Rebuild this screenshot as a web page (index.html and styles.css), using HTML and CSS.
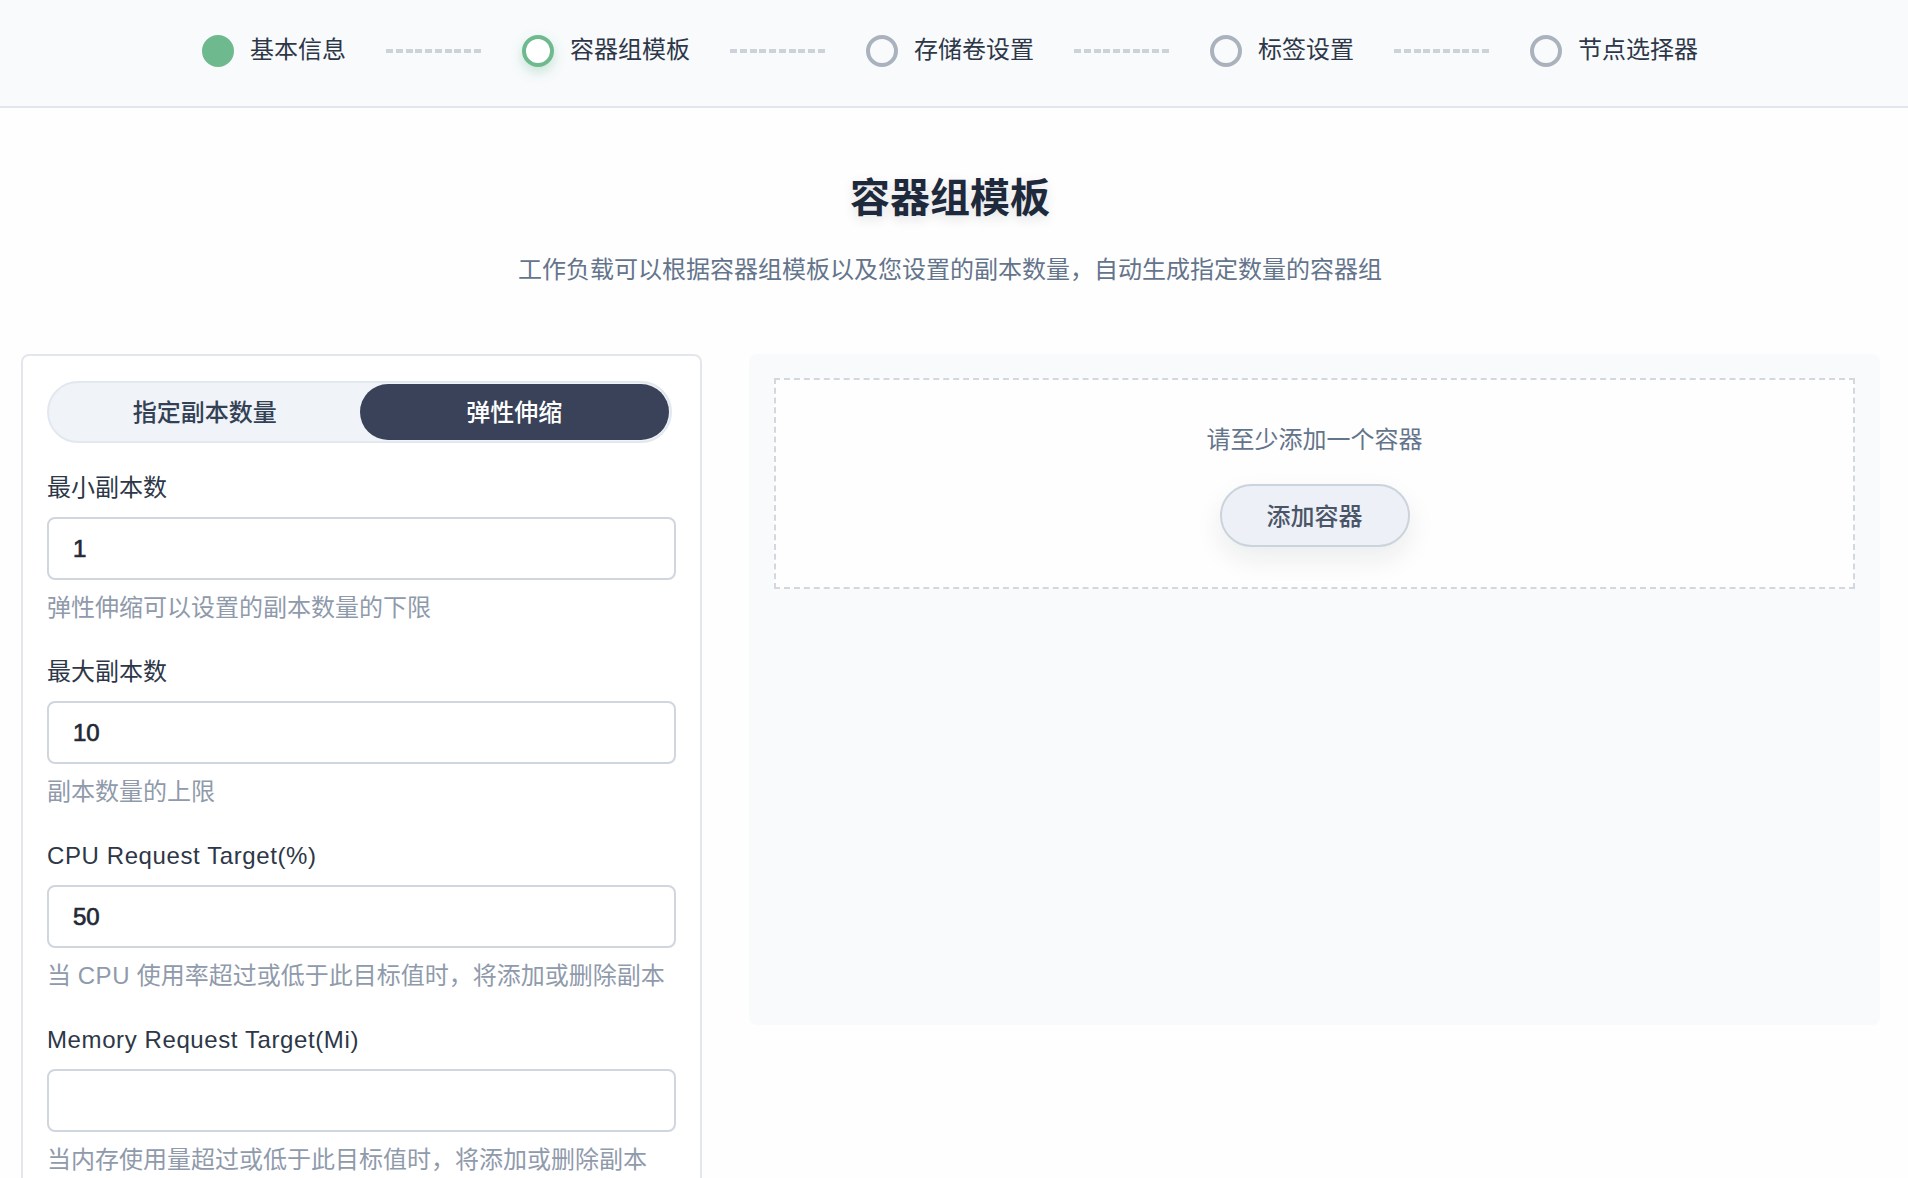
FILE: index.html
```html
<!DOCTYPE html>
<html lang="zh-CN">
<head>
<meta charset="utf-8">
<title>容器组模板</title>
<link rel="stylesheet" href="styles.css">
</head>
<body>
<header class="steps">
  <div class="steps-inner">
    <div class="step done"><span class="dot"></span><span class="step-label">基本信息</span></div>
    <span class="dash"></span>
    <div class="step current"><span class="dot"></span><span class="step-label">容器组模板</span></div>
    <span class="dash"></span>
    <div class="step"><span class="dot"></span><span class="step-label">存储卷设置</span></div>
    <span class="dash"></span>
    <div class="step"><span class="dot"></span><span class="step-label">标签设置</span></div>
    <span class="dash"></span>
    <div class="step"><span class="dot"></span><span class="step-label">节点选择器</span></div>
  </div>
</header>

<main class="page">
  <h1 class="title">容器组模板</h1>
  <p class="subtitle">工作负载可以根据容器组模板以及您设置的副本数量，自动生成指定数量的容器组</p>

  <div class="layout">
    <section class="card">
      <div class="toggle">
        <button class="toggle-opt">指定副本数量</button>
        <button class="toggle-opt active">弹性伸缩</button>
      </div>

      <div class="field">
        <label class="field-label">最小副本数</label>
        <div class="input">1</div>
        <p class="help">弹性伸缩可以设置的副本数量的下限</p>
      </div>

      <div class="field">
        <label class="field-label">最大副本数</label>
        <div class="input">10</div>
        <p class="help">副本数量的上限</p>
      </div>

      <div class="field">
        <label class="field-label latin">CPU Request Target(%)</label>
        <div class="input">50</div>
        <p class="help">当 <span class="latin">CPU</span> 使用率超过或低于此目标值时，将添加或删除副本</p>
      </div>

      <div class="field">
        <label class="field-label latin">Memory Request Target(Mi)</label>
        <div class="input"></div>
        <p class="help">当内存使用量超过或低于此目标值时，将添加或删除副本</p>
      </div>
    </section>

    <section class="panel">
      <div class="empty-box">
        <p class="empty-text">请至少添加一个容器</p>
        <button class="add-btn">添加容器</button>
      </div>
    </section>
  </div>
</main>
</body>
</html>
```

FILE: styles.css
```css
* {
  box-sizing: border-box;
}

html, body {
  margin: 0;
  padding: 0;
  background: #fefefe;
}

body {
  font-family: "Liberation Sans", "Noto Sans CJK SC", sans-serif;
  color: #2d3748;
  overflow-x: hidden;
}

.latin {
  letter-spacing: 0.6px;
}

/* ---------- steps header ---------- */
.steps {
  width: 100%;
  height: 108px;
  background: #f8fafc;
  border-bottom: 2px solid #e2e6ec;
}

.steps-inner {
  width: 1900px;
  height: 102px;
  display: flex;
  align-items: center;
  justify-content: center;
}

.step {
  display: flex;
  align-items: center;
  gap: 16px;
}

.dot {
  width: 32px;
  height: 32px;
  border-radius: 50%;
  border: 4px solid #aab2bd;
  background: #f8fafc;
  flex: none;
}

.step.done .dot {
  background: #6eb98e;
  border-color: #6eb98e;
}

.step.current .dot {
  background: #ffffff;
  border-color: #6eb98e;
  box-shadow: 0 5px 12px rgba(110, 185, 142, 0.35);
}

.step-label {
  font-size: 24px;
  line-height: 36px;
  color: #2d3748;
  margin-top: -2px;
}

.dash {
  width: 96px;
  height: 4px;
  margin: 0 40px;
  flex: none;
  background: repeating-linear-gradient(to right, #cdd2d9 0 7px, transparent 7px 9.78px);
}

/* ---------- page ---------- */
.page {
  width: 1900px;
}

.title {
  margin: 62px 0 0;
  font-size: 40px;
  line-height: 56px;
  font-weight: 700;
  color: #1e293b;
  text-align: center;
  text-shadow: 0 4px 12px rgba(15, 23, 42, 0.12);
}

.subtitle {
  margin: 26px 0 0;
  font-size: 24px;
  line-height: 36px;
  color: #64748b;
  text-align: center;
}

.layout {
  margin-top: 66px;
  padding: 0 20px 0 21px;
  display: grid;
  grid-template-columns: 681px 1fr;
  gap: 47px;
  align-items: start;
}

/* ---------- left card ---------- */
.card {
  border: 2px solid #e3e7ed;
  border-radius: 8px;
  padding: 25px 24px 24px;
  background: #ffffff;
}

.toggle {
  width: calc(100% - 4px);
  height: 62px;
  border: 2px solid #e2e8f0;
  border-radius: 9999px;
  background: #f0f3f7;
  padding: 1px;
  display: grid;
  grid-template-columns: 1fr 1fr;
  margin-bottom: 27px;
}

.toggle-opt {
  border: none;
  background: transparent;
  border-radius: 9999px;
  font-family: inherit;
  font-size: 24px;
  font-weight: 500;
  color: #334155;
  padding: 0 0 3px;
  cursor: pointer;
}

.toggle-opt.active {
  background: #394259;
  color: #ffffff;
}

.field {
  margin-bottom: 28px;
}

.field-label {
  display: block;
  font-size: 24px;
  line-height: 36px;
  color: #2d3748;
  margin-bottom: 11px;
}

.input {
  height: 63px;
  border: 2px solid #d0d6de;
  border-radius: 8px;
  background: #ffffff;
  padding: 0 24px;
  display: flex;
  align-items: center;
  font-size: 24px;
  font-weight: 500;
  color: #1f2937;
  -webkit-text-stroke: 0.7px #1f2937;
}

.help {
  margin: 10px 0 0;
  font-size: 24px;
  line-height: 36px;
  color: #8f9aab;
}

/* ---------- right panel ---------- */
.panel {
  height: 671px;
  background: #f8fafc;
  border-radius: 8px;
  padding: 24px 25px;
}

.empty-box {
  height: 211px;
  border: 2px dashed #d3d8df;
  background: #fefefe;
  padding-top: 42px;
  display: flex;
  flex-direction: column;
  align-items: center;
}

.empty-text {
  margin: 0;
  font-size: 24px;
  line-height: 36px;
  color: #64748b;
}

.add-btn {
  margin-top: 26px;
  width: 190px;
  height: 63px;
  border: 2px solid #cbd3dd;
  border-radius: 9999px;
  background: #edf1f7;
  font-family: inherit;
  font-size: 24px;
  font-weight: 500;
  color: #4a5568;
  padding: 0 0 2px;
  box-shadow: 0 12px 28px rgba(15, 23, 42, 0.08);
  cursor: pointer;
}
```
